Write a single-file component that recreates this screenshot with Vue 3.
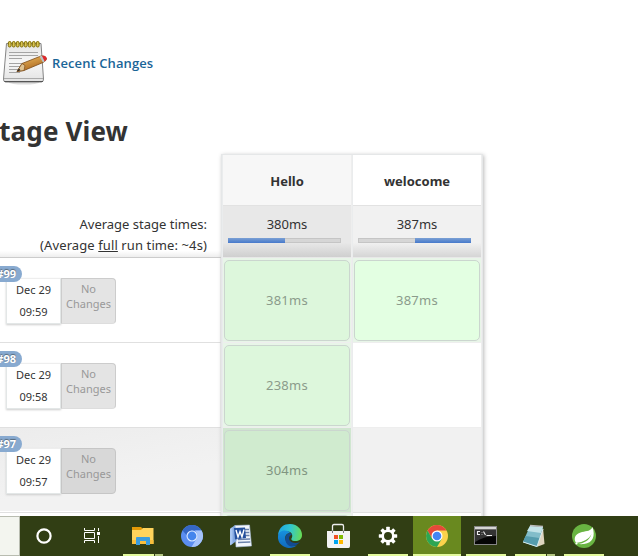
<script setup>
const stages = [
  { name: 'Hello', avg: '380ms', offset: 0, share: 50, hovered: true },
  { name: 'welocome', avg: '387ms', offset: 50, share: 50, hovered: false },
]
const runs = [
  { id: '#99', date: 'Dec 29', time: '09:59', cells: ['381ms', '387ms'] },
  { id: '#98', date: 'Dec 29', time: '09:58', cells: ['238ms', ''] },
  { id: '#97', date: 'Dec 29', time: '09:57', cells: ['304ms', ''], dim: true },
  { id: 'next', cells: ['', ''], last: true },
]
const apps = [
  { icon: 'cortana' },
  { icon: 'taskview' },
  { icon: 'explorer', open: true, many: true },
  { icon: 'chromium' },
  { icon: 'word' },
  { icon: 'edge', open: true },
  { icon: 'store' },
  { icon: 'settings', open: true },
  { icon: 'chrome', open: true, active: true },
  { icon: 'cmd', open: true },
  { icon: 'notepad', open: true, many: true },
  { icon: 'spring', open: true },
]
const teeth = [0, 45, 90, 135, 180, 225, 270, 315]
const rings = [0, 1, 2, 3, 4, 5, 6, 7]
</script>

<template>
  <div class="screen">
    <main class="page">
      <div class="recent">
        <svg class="pad" width="46" height="46" viewBox="0 0 46 46">
          <defs>
            <linearGradient id="paper" x1="0" y1="0" x2="0" y2="1">
              <stop offset="0" stop-color="#e4e4e4" /><stop offset=".5" stop-color="#f7f7f7" /><stop offset="1" stop-color="#e2e2e2" />
            </linearGradient>
            <linearGradient id="wood" x1="0" y1="0" x2=".5" y2="1">
              <stop offset="0" stop-color="#f3c164" /><stop offset="1" stop-color="#a8641c" />
            </linearGradient>
          </defs>
          <ellipse cx="22" cy="43.500" rx="15" ry="2" fill="#ddd" />
          <path d="M4.500 4.500H39L41.500 40Q41.500 43 39.500 43H3.500Q1.500 43 1.500 40Z" fill="url(#paper)" stroke="#858585" />
          <path d="M2 39.500H41" stroke="#aaa" />
          <path d="M2.500 42.500H41" stroke="#555" />
          <path d="M7 13.500H36M7 16.500H36M7 19.500H20M7 24.500H30M7 27.500H26M7 30.500H22M7 33.500H18" stroke="#a4a4a4" />
          <g v-for="r in rings" :key="r" :transform="`translate(${5.700 + r * 4} 0)`">
            <rect x=".6" y="2.500" width="2.800" height="5.500" rx="1.400" fill="#d8c455" stroke="#806c00" />
          </g>
          <path d="M15 32.500L20 24.500L39 17Q44 16.500 44.500 20Q44 22 41 23.500L22 31.500Z" fill="url(#wood)" stroke="#7b4a18" stroke-width=".8" />
          <path d="M15 32.500L20 24.500L23 26.500L22 31.500Z" fill="#dfc392" stroke="#7b4a18" stroke-width=".7" />
          <path d="M15 32.500L17 29.500L18.500 31.200Z" fill="#222" />
          <path d="M37.500 17.500L40 16.700L43 22L41 23.500Z" fill="#b9c2c9" />
          <path d="M40 16.800Q44 16 44.700 19.500Q44.500 21.500 42.500 22.300Z" fill="#e0282e" />
        </svg>
        <a class="link">Recent Changes</a>
      </div>

      <div class="title"><h2>tage View</h2></div>

      <section class="board">
        <div class="runs">
          <div class="averages">
            <p>Average stage times:</p>
            <p class="full">(Average <u>full</u> run time: ~4s)</p>
          </div>
          <div v-for="run in runs" :key="run.id" class="run" :class="{ dim: run.dim, last: run.last }">
            <template v-if="!run.last">
              <div class="badge">{{ run.id }}</div>
              <div class="info">
                <div class="when"><span>{{ run.date }}</span><span>{{ run.time }}</span></div>
                <div class="changes"><span>No</span><span>Changes</span></div>
              </div>
            </template>
          </div>
        </div>

        <div class="stages">
          <div v-for="(stage, s) in stages" :key="stage.name" class="stage" :class="{ hovered: stage.hovered }">
            <div class="name">{{ stage.name }}</div>
            <div class="avg">
              <span>{{ stage.avg }}</span>
              <div class="track">
                <div class="fill" :style="{ marginLeft: stage.offset + '%', width: stage.share + '%' }"></div>
              </div>
            </div>
            <div v-for="run in runs" :key="run.id" class="cell" :class="{ ok: run.cells[s] || (run.last && s === 0), dim: run.dim }">
              <div v-if="run.cells[s] || (run.last && s === 0)" class="result">{{ run.cells[s] }}</div>
            </div>
          </div>
        </div>
      </section>
    </main>

    <footer class="taskbar">
      <div class="search"></div>
      <div v-for="app in apps" :key="app.icon" class="app" :class="{ active: app.active }">
        <svg width="28" height="28" viewBox="0 0 28 28">
          <g v-if="app.icon === 'cortana'"><circle cx="13" cy="14" r="6.600" fill="none" stroke="#fff" stroke-width="2.200" /></g>
          <g v-else-if="app.icon === 'taskview'" fill="none" stroke="#fff" stroke-width="1">
            <path d="M4.500 6V8.500H14.500V6M4.500 21V18.500H14.500V21M4.500 10.500H14.500V16.500H4.500ZM18.500 6V9M18.500 14V21" />
            <rect x="17" y="10" width="3" height="3" fill="#fff" stroke="none" />
          </g>
          <g v-else-if="app.icon === 'explorer'">
            <path d="M3 5H12L14 7H24V9H3Z" fill="#e39a08" />
            <path d="M3 8H12L14 6H24.500V22H3Z" fill="#ffd45c" />
            <path d="M3 18H24.500V22H3Z" fill="#f9bf3c" />
            <path d="M7 23V16Q7 15 8 15H20Q21 15 21 16V23H17V19H11V23Z" fill="#3b9ddd" />
          </g>
          <g v-else-if="app.icon === 'chromium'">
            <circle cx="14" cy="14" r="11" fill="#5b8ef0" />
            <path d="M4.500 8.500A11 11 0 0 1 23.500 8.500H14Q9.500 9 8.600 13Z" fill="#3567c4" />
            <path d="M23.600 8.600A11 11 0 0 1 13.500 25L18.700 16.500Q20.500 12 17 8.600Z" fill="#a5c3fb" />
            <circle cx="14" cy="14" r="5.500" fill="#dce9ff" /><circle cx="14" cy="14" r="4.400" fill="#4485ed" />
          </g>
          <g v-else-if="app.icon === 'word'">
            <path d="M8 3.500L22.500 3L24.500 24L9 25Z" fill="#f3f7fd" stroke="#a9bddd" stroke-width=".6" />
            <path d="M17 7.500H22M17 10.500H22.300M17 13.500H22.500M11 17.500L23 17M11 20.500L23.300 20" stroke="#6c83ac" stroke-width="1.400" />
            <path d="M3 7L8 3L9.500 19L4 23Z" fill="#86aae2" />
            <path d="M3 7L5.500 5V21.500L3 23.500Z" fill="#a9c6f1" />
            <path d="M7 6L18 5.500L19 16L8 17.500Z" fill="#234f9d" />
            <path d="M9 8L11 15L13 9.500L15 15L17 7.500" fill="none" stroke="#fff" stroke-width="1.400" />
          </g>
          <g v-else-if="app.icon === 'edge'">
            <defs>
              <linearGradient id="wave" x1="0" y1=".4" x2="1" y2=".5"><stop offset="0" stop-color="#1ea5e3" /><stop offset=".5" stop-color="#31c6d0" /><stop offset="1" stop-color="#67dd55" /></linearGradient>
              <linearGradient id="sea" x1="0" y1="0" x2="0" y2="1"><stop offset="0" stop-color="#1691df" /><stop offset="1" stop-color="#1169bd" /></linearGradient>
            </defs>
            <path d="M2 13C3 5 8 2 14 2C22 2 26 8 26 13C26 18 22 19.500 18 19C15 18.500 15 17 16 15.500C18 10 10 6 2 13Z" fill="url(#wave)" />
            <path d="M2 14C3 8 11 7 14 11C10 11 8 15 10 19C12 24 18 25 21 23C18 26 14 26.500 11 25.700C5 24 1.500 20 2 14Z" fill="url(#sea)" />
            <path d="M14 11C9 12 8 18 11 22C14 26 19 25 24 20C20 22 14 21 13 17C12.700 15 14 13 16 12.500Z" fill="#124b92" />
          </g>
          <g v-else-if="app.icon === 'store'">
            <path d="M7.500 11V4Q7.500 2.500 9 2.500H17Q18.500 2.500 18.500 4V11" fill="none" stroke="#eee" stroke-width="1.300" />
            <path d="M2 9H25V24Q25 26 23.500 26H3.500Q2 26 2 24Z" fill="#f3f3f3" />
            <path d="M7.500 8.500V11M18.500 8.500V11" stroke="#777" stroke-width="1" />
            <path d="M9 13H13V17H9Z" fill="#f25022" /><path d="M14 13H18V17H14Z" fill="#7fba00" />
            <path d="M9 18H13V22H9Z" fill="#00a4ef" /><path d="M14 18H18V22H14Z" fill="#ffb900" />
          </g>
          <g v-else-if="app.icon === 'settings'">
            <rect v-for="a in teeth" :key="a" x="12.200" y="4.800" width="3.600" height="4" rx=".5" fill="#fff" :transform="`rotate(${a} 14 14)`" />
            <circle cx="14" cy="14" r="5.300" fill="none" stroke="#fff" stroke-width="2.600" />
          </g>
          <g v-else-if="app.icon === 'chrome'">
            <circle cx="14" cy="14" r="11" fill="#fbd34c" />
            <path d="M4.500 8.500A11 11 0 0 1 23.500 8.500H14L9.200 16.700Z" fill="#e5493a" />
            <path d="M4.500 8.500A11 11 0 0 0 14 25L18.800 16.700H9.200Z" fill="#2da653" />
            <circle cx="14" cy="14" r="5.500" fill="#fff" /><circle cx="14" cy="14" r="4.300" fill="#4285f4" />
          </g>
          <g v-else-if="app.icon === 'cmd'">
            <rect x="2.500" y="4.500" width="22" height="18" fill="#050505" stroke="#858585" />
            <path d="M3 5H24V7.500H3Z" fill="#d5d5d5" />
            <path d="M3 8H24V14Q12 14 3 20Z" fill="#333" />
            <path d="M8 9.500H5.500V12.500H8M10 10V10.500M10 12V12.500M11.500 9.500L13.500 13M14.500 13.500H20" fill="none" stroke="#eee" stroke-width="1.100" />
          </g>
          <g v-else-if="app.icon === 'notepad'">
            <path d="M22 6L23.500 22L15.500 25Z" fill="#ded5bf" />
            <path d="M9 4L22 5L16 25L2 20Z" fill="#82bdca" />
            <path d="M9 4L22 5L20 11L6 9Z" fill="#c2e3e8" />
            <path d="M4.500 14L18.500 16L16 25L2 20Z" fill="#559cad" />
            <path d="M9 3.500L22 4.500" stroke="#bbb" stroke-width="1.400" />
            <path d="M2 20L16 24.500L22 7" fill="none" stroke="#d9ecee" stroke-width="1" />
          </g>
          <g v-else>
            <circle cx="14" cy="14" r="12" fill="#69b442" />
            <path d="M22.500 5C21 9 17 9 12 10C6 11.500 4 15 5 19C6 22 10 22.500 14 22C23 21 25.500 14 22.500 5Z" fill="#fff" />
            <path d="M5.500 21C14 20 19 17 21.500 12C19.500 18.500 14 21.500 7 22Z" fill="#69b442" />
            <circle cx="6.500" cy="21.500" r="1.100" fill="#fff" />
          </g>
        </svg>
        <div v-if="app.open" class="line"><i class="main"></i><i v-if="app.many" class="more"></i></div>
      </div>
    </footer>
  </div>
</template>

<style>
body { margin: 0; overflow: hidden; background: #fff; }
</style>

<style scoped>
.screen { width: 638px; height: 556px; display: flex; flex-direction: column; overflow: hidden; font-family: "Noto Sans", "Open Sans", sans-serif; color: #333; }
.page { height: 516px; overflow: hidden; display: flex; flex-direction: column; }
.recent { display: flex; align-items: center; height: 46px; padding: 39px 0 0 2px; gap: 4px; flex: none; }
.pad { flex: none; }
.link { font: 600 13px/18px "Open Sans", sans-serif; letter-spacing: .1px; color: #1a6598; white-space: nowrap; margin-top: 2px; }
.title { width: 128px; display: flex; justify-content: flex-end; margin-top: 28px; height: 36px; flex: none; }
h2 { margin: 0; font: 700 26px/36px "Noto Sans", sans-serif; letter-spacing: .15px; white-space: nowrap; }
.board { display: flex; flex: none; margin-top: 5px; }
.runs { width: 221px; box-sizing: border-box; padding-top: 52px; }
.averages { height: 52px; box-sizing: border-box; padding: 8px 14px 0 0; text-align: right; font-size: 13px; line-height: 21px; border-bottom: 1px solid #ccc; background: linear-gradient(#fff 88%, #eee); white-space: nowrap; }
.averages p { margin: 0; }
.averages .full { letter-spacing: .1px; }
.run { height: 85px; box-sizing: border-box; border-bottom: 1px solid #e0e0e0; box-shadow: inset -1px 0 #eee; padding-top: 8px; display: flex; flex-direction: column; background: #fff; }
.run.dim { background: linear-gradient(170deg, #ececec, #f2f2f2 60%); box-shadow: inset 0 -1px #fff; }
.badge { width: 22px; height: 16px; border-radius: 0 8px 8px 0; background: #88aad0; color: #fff; font: 700 11px/16px "Noto Sans", sans-serif; text-shadow: 0 -1px 1px #567; display: flex; justify-content: flex-end; padding-right: 6px; box-sizing: border-box; z-index: 1; }
.info { display: flex; margin: -4px 0 0 6px; height: 47px; }
.when { width: 55px; box-sizing: border-box; background: #fff; border: 1px solid #e3e7e7; border-top-color: #eee; box-shadow: 0 1px 2px #ccc; display: flex; flex-direction: column; align-items: center; font-size: 11px; line-height: 22px; height: 46px; }
.changes { width: 55px; box-sizing: border-box; height: 46px; border: 1px solid #ccc; border-bottom-color: #ddd; border-radius: 0 4px 4px 0; background: #e4e4e4; color: #999; display: flex; flex-direction: column; align-items: center; font-size: 11px; line-height: 15px; padding-top: 2px; }
.dim .changes { background: #d8d8d8; border-color: #c6c6c6; }
.stages { display: flex; width: 262px; box-sizing: border-box; border: 1px solid #e5e7e8; border-width: 1px 1px 0; box-shadow: 1px 1px 4px #bbb; }
.stage { width: 130px; box-sizing: border-box; border-right: 1px solid #eee; border-left: 1px solid #eaeced; }
.name { height: 51px; box-sizing: border-box; border-bottom: 1px solid #e2e2e2; text-align: center; font-weight: 700; font-size: 13px; line-height: 52px; background: #fff; }
.avg { height: 52px; box-sizing: border-box; padding: 8px 10px 0 5px; background: linear-gradient(#f1f1f1 72%, #d5d5d5); display: flex; flex-direction: column; border-bottom: 1px solid #e8e8e8; font-size: 13px; line-height: 20px; text-align: center; }
.avg span { padding-left: 5px; }
.track { height: 5px; margin-top: 4px; box-sizing: border-box; background: #d6d6d6; box-shadow: inset 0 0 0 1px #c5c5c5; }
.fill { height: 5px; background: linear-gradient(#7ba0d4, #4679cb); }
.hovered .name { background: #f7f7f7; }
.hovered .avg { background: linear-gradient(#e8e8e8 72%, #cfcfcf); }
.cell { height: 85px; box-sizing: border-box; padding: 2px 1px; border-bottom: 1px solid #eee; background: #fff; }
.cell.ok { background: #e8f5e8; }
.cell.dim { background: #f1f1f1; border-color: #e0e0e0; }
.cell.ok.dim { background: #d0e6d0; }
.result { height: 81px; box-sizing: border-box; border: 1px solid #cbd6cf; border-radius: 5px; background: #e3ffe2; color: #8b9b8b; font-size: 13px; line-height: 79px; text-align: center; letter-spacing: .3px; }
.hovered .result { background: #ddf7dc; }
.hovered .dim .result { background: #d0ebcf; color: #819581; }
.taskbar { height: 40px; display: flex; background: #313e14; flex: none; }
.search { width: 20px; box-sizing: border-box; background: #f3f5ef; border: solid #b8bcb0; border-width: 1px 1px 1px 0; }
.app { width: 48px; margin-left: 1px; display: flex; flex-direction: column; align-items: center; padding-top: 6px; box-sizing: border-box; }
.app svg { flex: none; }
.active { background: #69891f; }
.line { width: 40px; height: 2px; margin-top: 4px; display: flex; gap: 1px; }
.active .line { width: 48px; }
.line i { background: #e3fa9d; }
.main { flex: 1; }
.line .more { width: 8px; background: #b2c580; }
</style>
